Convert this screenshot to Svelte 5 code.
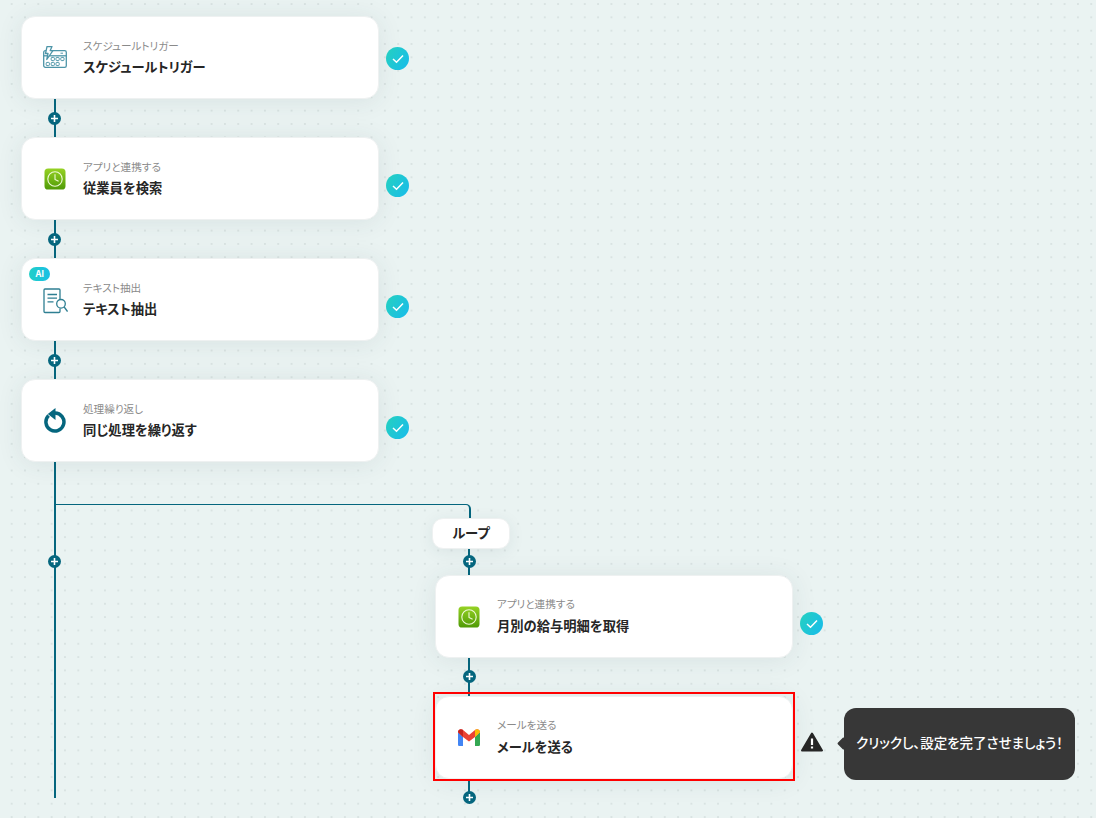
<script>
  const nodes = [
    { x: 21, y: 16, sub: 'スケジュールトリガー', title: 'スケジュールトリガー', icon: 'cal', done: true, first: true },
    { x: 21, y: 137, sub: 'アプリと連携する', title: '従業員を検索', icon: 'clock', done: true },
    { x: 21, y: 258, sub: 'テキスト抽出', title: 'テキスト抽出', icon: 'doc', done: true, ai: true },
    { x: 21, y: 379, sub: '処理繰り返し', title: '同じ処理を繰り返す', icon: 'loop', done: true },
    { x: 435, y: 575, sub: 'アプリと連携する', title: '月別の給与明細を取得', icon: 'clock', done: true, low: true },
    { x: 435, y: 696, sub: 'メールを送る', title: 'メールを送る', icon: 'gmail', error: true, low: true }
  ];
  const plus = [[54.5, 118.5], [54.5, 239.5], [54.5, 360.5], [54.5, 561.5], [469.5, 561.5], [469.5, 676], [469.5, 797.5]];
  const lines = [
    [54, 99, 2, 38], [54, 220, 2, 38], [54, 341, 2, 38], [54, 461, 2, 337],
    [468, 549, 2, 27], [468, 658, 2, 38], [468, 781, 2, 16]
  ];
  const pos = (x, y) => `left:${x}px;top:${y}px`;
  const box = (x, y, w, h) => `left:${x}px;top:${y}px;width:${w}px;height:${h}px`;
</script>

<div class="canvas">
  {#each lines as l}
    <div class="line" style={box(l[0], l[1], l[2], l[3])}></div>
  {/each}
  <div class="branch"></div>

  {#each nodes as n}
    <div class="node" style={pos(n.x, n.y)}>
      {#if n.ai}<span class="ai">AI</span>{/if}
      <div class="icon {n.icon}">
        {#if n.icon === 'cal'}
          <svg width="24" height="22" viewBox="0 0 24 22" fill="none" stroke="#4d95a8" stroke-width="1">
            <rect x="0.700" y="4.700" width="22.600" height="16.600" rx="1.600" fill="#fff" stroke-width="1.300"/>
            <path d="M0.700 9.800h22.600" stroke-width="1.300"/>
            <path d="M17.500 7.200h2.500"/>
            <rect x="8.200" y="11.400" width="3.200" height="3.200" rx="0.800"/>
            <rect x="13" y="11.400" width="3.200" height="3.200" rx="0.800"/>
            <rect x="17.800" y="11.400" width="3.200" height="3.200" rx="0.800"/>
            <rect x="3.200" y="16.400" width="3.200" height="3.200" rx="0.800"/>
            <rect x="8.200" y="16.400" width="3.200" height="3.200" rx="0.800"/>
            <rect x="13" y="16.400" width="3.200" height="3.200" rx="0.800"/>
            <path d="M4 0.600h5L7.200 4.600h2.700L3.800 13.500l1.200-6H2.500z" fill="#fff" stroke-width="1.300" stroke-linejoin="round"/>
          </svg>
        {:else if n.icon === 'clock'}
          <svg width="22" height="22" viewBox="0 0 22 22">
            <defs>
              <linearGradient id="g{n.y}" x1="0" y1="0" x2="0" y2="1">
                <stop offset="0" stop-color="#96d224"/>
                <stop offset="1" stop-color="#4f9a06"/>
              </linearGradient>
            </defs>
            <rect x="0.500" y="0.500" width="21" height="21" rx="3.600" fill="url(#g{n.y})"/>
            <circle cx="11" cy="11" r="7.200" fill="none" stroke="#eef9d8" stroke-width="1.100"/>
            <path d="M11 6.200V11.400L14.600 13.200" fill="none" stroke="#eef9d8" stroke-width="1.100"/>
          </svg>
        {:else if n.icon === 'doc'}
          <svg width="25" height="26" viewBox="0 0 25 26" fill="none" stroke="#2f7f92" stroke-width="1.300">
            <path d="M17 20.500V23.500a1 1 0 0 1-1 1H2a1 1 0 0 1-1-1V2a1 1 0 0 1 1-1h14a1 1 0 0 1 1 1v9"/>
            <path d="M4.500 6.500h9.500M4.500 10.200h9.500M4.500 13.900h6"/>
            <circle cx="18" cy="15.800" r="4.300"/>
            <path d="M21.200 19 24.500 23.500"/>
          </svg>
        {:else if n.icon === 'loop'}
          <svg width="22" height="25" viewBox="0 0 22 25">
            <path d="M11 5A9 9 0 1 1 4.600 7.600" fill="none" stroke="#05667e" stroke-width="3.500"/>
            <path d="M11.500 0V12L3.800 6z" fill="#05667e"/>
          </svg>
        {:else if n.icon === 'gmail'}
          <svg width="22" height="17" viewBox="0 0 22 17">
            <path d="M0 3.200V15.400c0 .9.600 1.600 1.500 1.600H5V8z" fill="#4285f4"/>
            <path d="M17 8v9h3.500c.9 0 1.500-.7 1.500-1.600V3.200z" fill="#34a853"/>
            <path d="M0 3.200C0 .8 2.700-.7 4.700.8L5 1 11 6 17 1l.3-.2C19.300-.7 22 .8 22 3.200L17 8l-6 4.600L5 8z" fill="#ea4335"/>
            <path d="M17 1l.3-.2C19.300-.7 22 .8 22 3.200L17 8z" fill="#fbbc04"/>
            <path d="M0 3.200C0 .8 2.700-.7 4.700.8L5 1v7z" fill="#c5221f"/>
          </svg>
        {/if}
      </div>
      <div class="text" class:low={n.low}>
        <div class="sub">{n.sub}</div>
        <div class="title">{n.title}</div>
      </div>
      {#if n.done}
        <span class="check" class:first={n.first}>
          <svg width="12" height="10" viewBox="0 0 12 10" fill="none" stroke="#fff" stroke-width="1.500">
            <path d="M1 5 4.500 8.300 11 1.500"/>
          </svg>
        </span>
      {/if}
    </div>
  {/each}

  <div class="frame"></div>

  <div class="loop-label">ループ</div>

  {#each plus as p}
    <span class="plus" style={pos(p[0], p[1])}>
      <svg width="7" height="7" viewBox="0 0 7 7" stroke="#fff" stroke-width="1.600"><path d="M3.500 0V7M0 3.500H7"/></svg>
    </span>
  {/each}

  <svg class="warn" width="22" height="20" viewBox="0 0 22 20">
    <path d="M11 1.500 21 18.500H1z" fill="#262626" stroke="#262626" stroke-width="2" stroke-linejoin="round"/>
    <path d="M11 6.500V13M11 14.600V16.600" stroke="#fff" stroke-width="2.200"/>
  </svg>

  <div class="tip">クリックし、設定を完了させましょう！</div>
</div>

<style>
  :global(body) {
    margin: 0;
  }
  .canvas {
    position: relative;
    width: 1096px;
    height: 818px;
    overflow: hidden;
    background-color: #eaf3f2;
    background-image: radial-gradient(circle at center, #d9e3e2 1px, transparent 1.100px);
    background-size: 13.330px 13.330px;
    background-position: 5px -2.670px;
    font-family: "Noto Sans CJK JP", "Noto Sans", sans-serif;
    font-feature-settings: "palt";
  }
  .line {
    position: absolute;
    background: #05667e;
  }
  .branch {
    position: absolute;
    left: 55px;
    top: 504px;
    width: 414px;
    height: 14px;
    border-top: 1.500px solid #05667e;
    border-right: 2px solid #05667e;
    border-top-right-radius: 5px;
  }
  .node {
    position: absolute;
    width: 356px;
    height: 81px;
    display: flex;
    align-items: center;
    background: #fff;
    border: 1px solid #eef1f1;
    border-radius: 14px;
    box-shadow: 0 2px 26px rgba(40, 70, 80, 0.09);
  }
  .icon {
    width: 61px;
    flex: none;
    display: flex;
    justify-content: center;
    padding-left: 5px;
    box-sizing: border-box;
  }
  .icon.doc {
    padding-top: 3px;
  }
  .icon.cal {
    padding-bottom: 2px;
  }
  .sub {
    font-size: 10.600px;
    line-height: 14px;
    color: #8a8a8a;
  }
  .title {
    font-size: 13.300px;
    line-height: 20px;
    margin-top: 4px;
    font-weight: 700;
    color: #262626;
  }
  .low .sub {
    margin-top: -1px;
  }
  .low .title {
    margin-top: 5px;
  }
  .ai {
    position: absolute;
    left: 7px;
    top: 8px;
    width: 21px;
    height: 14px;
    border-radius: 7px;
    background: linear-gradient(90deg, #22cfc7, #19bfe6);
    color: #fff;
    font-size: 8.500px;
    font-weight: 700;
    line-height: 14px;
    text-align: center;
    font-family: "Inter", sans-serif;
  }
  .check {
    position: absolute;
    left: 364px;
    top: 36px;
    width: 23px;
    height: 23px;
    border-radius: 50%;
    background: linear-gradient(120deg, #25d1bf, #18bbec);
    display: flex;
    align-items: center;
    justify-content: center;
  }
  .check.first {
    top: 30px;
  }
  .frame {
    position: absolute;
    left: 433px;
    top: 692px;
    width: 358px;
    height: 85px;
    border: 2px solid #f00;
  }
  .loop-label {
    position: absolute;
    left: 432px;
    top: 518px;
    width: 78px;
    height: 31px;
    box-sizing: border-box;
    background: #fff;
    border: 1px solid #eef1f1;
    border-radius: 11px;
    box-shadow: 0 3px 16px rgba(40, 70, 80, 0.08);
    text-align: center;
    font-size: 13.300px;
    font-weight: 700;
    line-height: 27px;
    color: #262626;
  }
  .plus {
    position: absolute;
    width: 13px;
    height: 13px;
    margin: -6.500px 0 0 -6.500px;
    border-radius: 50%;
    background: #05667e;
    display: flex;
    align-items: center;
    justify-content: center;
  }
  .warn {
    position: absolute;
    left: 801px;
    top: 732px;
  }
  .tip {
    position: absolute;
    left: 844px;
    top: 708px;
    width: 231px;
    height: 72px;
    border-radius: 12px;
    background: #373737;
    color: #fff;
    font-size: 13.500px;
    font-weight: 500;
    line-height: 68px;
    text-align: center;
    white-space: nowrap;
  }
  .tip::before {
    content: "";
    position: absolute;
    left: -5px;
    top: 31px;
    width: 9px;
    height: 9px;
    background: #373737;
    transform: rotate(45deg);
    border-radius: 1px;
  }
</style>
